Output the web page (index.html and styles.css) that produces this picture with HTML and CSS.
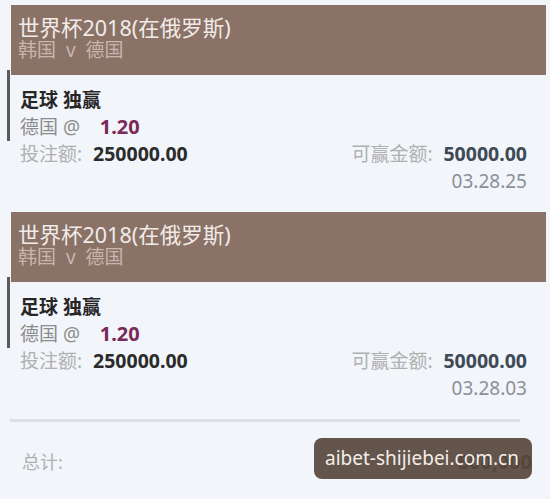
FILE: index.html
```html
<!DOCTYPE html>
<html lang="zh-CN">
<head>
    <meta charset="UTF-8">
    <meta name="viewport" content="width=device-width, initial-scale=1.0">
    <title>注单</title>
    <link rel="stylesheet" href="styles.css">
</head>
<body>
    <div class="slips">
        <div class="slip">
            <div class="slip-head">
                <div class="league">世界杯2018(在俄罗斯)</div>
                <div class="match">韩国&nbsp;&nbsp;v&nbsp;&nbsp;德国</div>
            </div>
            <div class="pick">
                <div class="market">足球 独赢</div>
                <div class="selection">德国 @&nbsp;&nbsp;&nbsp; <span class="odds">1.20</span></div>
            </div>
            <div class="row">
                <div><span class="label">投注额:</span> <span class="amount">250000.00</span></div>
                <div><span class="label">可赢金额:</span> <span class="amount win">50000.00</span></div>
            </div>
            <div class="time">03.28.25</div>
        </div>

        <div class="slip">
            <div class="slip-head">
                <div class="league">世界杯2018(在俄罗斯)</div>
                <div class="match">韩国&nbsp;&nbsp;v&nbsp;&nbsp;德国</div>
            </div>
            <div class="pick">
                <div class="market">足球 独赢</div>
                <div class="selection">德国 @&nbsp;&nbsp;&nbsp; <span class="odds">1.20</span></div>
            </div>
            <div class="row">
                <div><span class="label">投注额:</span> <span class="amount">250000.00</span></div>
                <div><span class="label">可赢金额:</span> <span class="amount win">50000.00</span></div>
            </div>
            <div class="time">03.28.03</div>
        </div>
    </div>

    <div class="total">
        <span class="label">总计:</span>
        <span class="total-sum">500,000</span>
        <div class="mark">aibet-shijiebei.com.cn</div>
    </div>
</body>
</html>
```

FILE: styles.css
```css
* {
    margin: 0;
    padding: 0;
    box-sizing: border-box;
}
body {
    width: 550px;
    height: 499px;
    overflow: hidden;
    background-color: #f2f5fa;
    font-family: "Noto Sans", "Noto Sans CJK SC", sans-serif;
    color: #333;
}
.slips {
    padding-top: 5px;
}
.slip {
    margin-bottom: 17px;
}
.slip-head {
    margin-left: 11px;
    width: 535px;
    height: 70px;
    padding: 11px 0 0 7px;
    background-color: #8a7267;
}
.slip-head .league {
    font-size: 21.5px;
    line-height: 23px;
    color: #f1ebe7;
}
.slip-head .match {
    font-size: 19px;
    line-height: 23px;
    color: #c9b5ad;
}
.pick {
    margin-top: -5px;
    margin-left: 7px;
    padding: 17px 0 0 10px;
    border-left: 3px solid #5b5b5b;
    font-size: 19px;
    line-height: 27px;
}
.pick .market {
    font-weight: bold;
    color: #262626;
}
.pick .selection {
    color: #8c8c8c;
}
.pick .odds {
    font-size: 20px;
    line-height: 20px;
    font-weight: bold;
    color: #7b2a57;
}
.row {
    display: flex;
    justify-content: space-between;
    padding: 0 23px 0 20px;
    font-size: 19px;
    line-height: 27px;
}
.label {
    color: #b0b0b0;
}
.amount {
    margin-left: 6px;
    font-size: 19.5px;
    line-height: 20px;
    font-weight: bold;
    color: #2b2b2b;
}
.amount.win {
    color: #3e4a55;
}
.time {
    padding-right: 23px;
    text-align: right;
    font-size: 19px;
    line-height: 27px;
    color: #8b9096;
}
.total {
    position: relative;
    margin: 9px 30px 0 10px;
    padding: 22px 0 0 12px;
    border-top: 3px solid #dde0e5;
    display: flex;
    justify-content: space-between;
    align-items: center;
    font-size: 18px;
    line-height: 36px;
}
.total-sum {
    margin-right: -12px;
    font-size: 20px;
    font-weight: bold;
    color: #2b2b2b;
}
/* site stamp over the total row */
.mark {
    position: absolute;
    left: 304px;
    top: 16px;
    width: 218px;
    height: 41px;
    padding-left: 11px;
    border-radius: 8px;
    background-color: rgba(88, 72, 62, 0.93);
    font-size: 19px;
    line-height: 41px;
    color: #f3eee9;
}
```
